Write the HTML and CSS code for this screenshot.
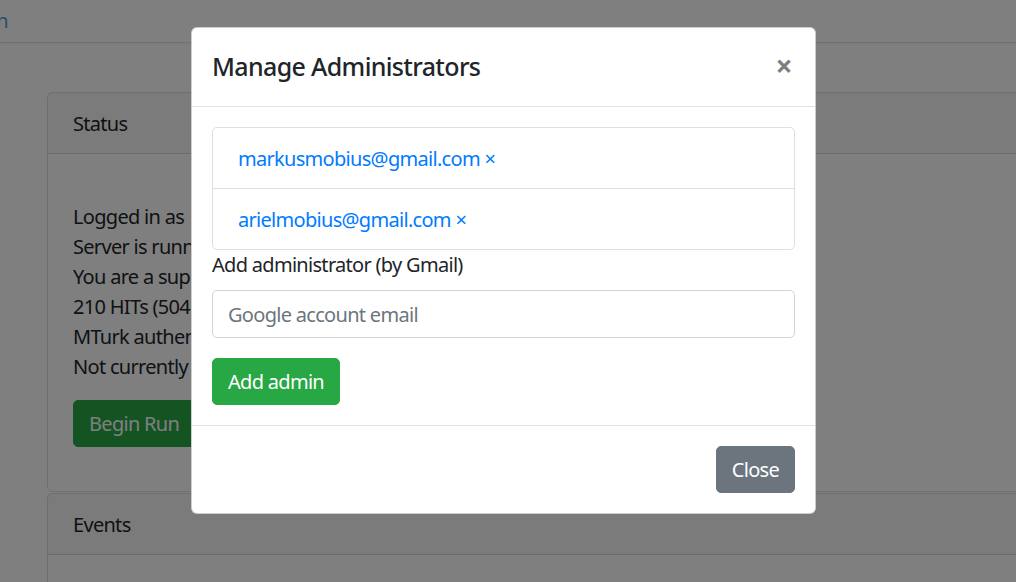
FILE: index.html
```html
<!DOCTYPE html>
<html>
<head>
<meta charset="utf-8">
<link rel="stylesheet" href="styles.css">
</head>
<body>
<nav class="navbar">
  <span class="brand">Admin</span>
</nav>
<main class="container">
  <section class="card">
    <div class="card-header">Status</div>
    <div class="card-body">
      <div class="clip">
        <div class="spacer"></div>
        <p class="line">Logged in as</p>
        <p class="line">Server is running</p>
        <p class="line">You are a super</p>
        <p class="line">210 HITs (504</p>
        <p class="line">MTurk authentication</p>
        <p class="line">Not currently</p>
        <button class="btn btn-success begin">Begin Run</button>
      </div>
    </div>
  </section>
  <section class="card">
    <div class="card-header">Events</div>
    <div class="card-body"></div>
  </section>
</main>

<div class="backdrop"></div>

<div class="modal">
  <div class="modal-content">
    <div class="modal-header">
      <h5 class="modal-title">Manage Administrators</h5>
      <span class="close">×</span>
    </div>
    <div class="modal-body">
      <ul class="list-group">
        <li class="list-group-item"><a class="email">markusmobius@gmail.com</a> <a class="remove">×</a></li>
        <li class="list-group-item"><a class="email">arielmobius@gmail.com</a> <a class="remove">×</a></li>
      </ul>
      <div class="form-group">
        <label class="label">Add administrator (by Gmail)</label>
        <input class="form-control" type="text" placeholder="Google account email">
      </div>
      <button class="btn btn-success">Add admin</button>
    </div>
    <div class="modal-footer">
      <button class="btn btn-secondary">Close</button>
    </div>
  </div>
</div>
</body>
</html>
```
FILE: styles.css
```css
* { box-sizing: border-box; }
html, body { margin: 0; padding: 0; }
body {
  width: 1016px;
  height: 582px;
  overflow: hidden;
  background: #fff;
  color: #212529;
  font-family: "Noto Sans", "Open Sans", sans-serif;
  font-size: 20px;
  line-height: 30px;
  letter-spacing: -0.7px;
  position: relative;
}
.navbar {
  height: 43px;
  border-bottom: 1px solid #dee2e6;
  box-shadow: 0 1px 2px rgba(0,0,0,.05);
  display: flex;
  align-items: center;
  overflow: hidden;
}
.brand {
  color: #5a9ad0;
  margin-left: -50px;
  white-space: nowrap;
}
.container {
  padding: 49px 0 0 47px;
  width: 1200px;
}
.card {
  border: 1px solid rgba(0,0,0,.125);
  border-radius: 5px;
  margin-bottom: 1px;
}
.card-header {
  padding: 16px 25px 14px;
  background: rgba(0,0,0,.03);
  border-bottom: 1px solid rgba(0,0,0,.125);
}
.card-body {
  padding: 25px;
}
.clip {
  width: 119px;
  overflow: hidden;
  white-space: nowrap;
}
.spacer { height: 23px; }
.line { margin: 0; }
.begin {
  margin-top: 18px;
  margin-bottom: 19px;
  width: 160px;
  text-align: left;
}

.btn {
  font-family: inherit;
  font-size: 20px;
  line-height: 30px;
  letter-spacing: -0.7px;
  padding: 8px 15px 7px;
  border: 1px solid transparent;
  border-radius: 5px;
  color: #fff;
  display: inline-block;
}
.btn-success { background: #28a745; border-color: #28a745; }
.btn-secondary { background: #6c757d; border-color: #6c757d; }

.backdrop {
  position: absolute;
  inset: 0;
  background: rgba(0,0,0,.5);
}
.modal {
  position: absolute;
  left: 191px;
  top: 27px;
  width: 625px;
}
.modal-content {
  background: #fff;
  border: 1px solid rgba(0,0,0,.2);
  border-radius: 6px;
}
.modal-header {
  display: flex;
  align-items: flex-start;
  justify-content: space-between;
  padding: 20px;
  border-bottom: 1px solid #dee2e6;
}
.modal-title {
  margin: 0;
  font-size: 25px;
  line-height: 37.5px;
  font-weight: 500;
  letter-spacing: -0.65px;
}
.close {
  font-size: 30px;
  font-weight: 700;
  line-height: 30px;
  color: #000;
  opacity: .5;
  text-shadow: 0 1px 0 #fff;
  margin-top: 3px;
  margin-right: 3px;
}
.modal-body {
  padding: 20px;
  border-bottom: 1px solid #dee2e6;
}
.list-group {
  list-style: none;
  margin: 0;
  padding: 0;
  border: 1px solid rgba(0,0,0,.125);
  border-radius: 5px;
}
.list-group-item {
  padding: 16px 25px 14px;
}
.list-group-item + .list-group-item {
  border-top: 1px solid rgba(0,0,0,.125);
}
.email, .remove { color: #007bff; }
.form-group { margin-bottom: 20px; }
.label {
  display: block;
  margin-bottom: 10px;
}
.form-control {
  display: block;
  width: 100%;
  height: 48px;
  padding: 8px 15px 7px;
  font-family: inherit;
  font-size: 20px;
  line-height: 30px;
  letter-spacing: -0.7px;
  color: #495057;
  border: 1px solid #ced4da;
  border-radius: 5px;
}
.form-control::placeholder { color: #6c757d; }
.modal-footer {
  display: flex;
  justify-content: flex-end;
  padding: 20px;
}
```
